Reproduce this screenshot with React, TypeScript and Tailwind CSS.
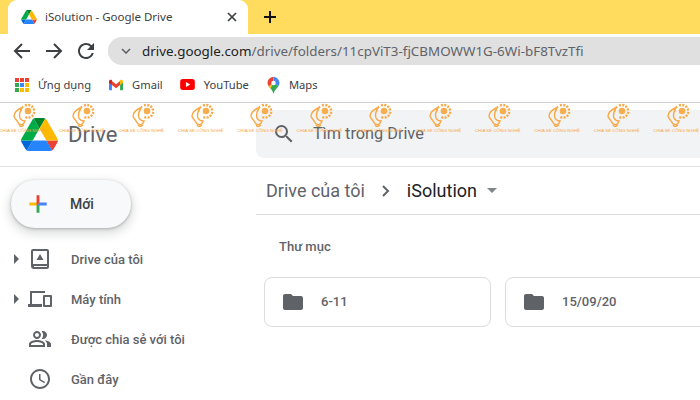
import React from "react";

const DriveLogo = ({ className }: { className: string }) => (
  <svg viewBox="0 0 87.3 78" className={className}>
    <path d="m6.6 66.85 3.85 6.65c.8 1.4 1.95 2.5 3.3 3.3l13.75-23.8h-27.5c0 1.55.4 3.1 1.2 4.5z" fill="#0066da" />
    <path d="m43.65 25-13.75-23.8c-1.35.8-2.5 1.9-3.3 3.3l-25.4 44a9.06 9.06 0 0 0 -1.2 4.5h27.5z" fill="#00ac47" />
    <path d="m73.55 76.8c1.35-.8 2.5-1.9 3.3-3.3l1.6-2.75 7.65-13.25c.8-1.4 1.2-2.95 1.2-4.5h-27.502l5.852 11.5z" fill="#ea4335" />
    <path d="m43.65 25 13.75-23.8c-1.35-.8-2.9-1.2-4.5-1.2h-18.5c-1.6 0-3.15.45-4.5 1.2z" fill="#00832d" />
    <path d="m59.8 53h-32.3l-13.75 23.8c1.35.8 2.9 1.2 4.5 1.2h50.8c1.6 0 3.15-.45 4.5-1.2z" fill="#2684fc" />
    <path d="m73.4 26.5-12.7-22c-.8-1.4-1.95-2.5-3.3-3.3l-13.75 23.8 16.15 28h27.45c0-1.55-.4-3.1-1.2-4.5z" fill="#ffba00" />
  </svg>
);

const Stroke = ({ d, w = 2 }: { d: string; w?: number }) => (
  <svg viewBox="0 0 24 24" className="w-[24px] h-[24px]" fill="none" stroke="#3c4043" strokeWidth={w}>
    <path d={d} />
  </svg>
);

const Mark = () => (
  <div className="w-[59.45px] shrink-0 flex flex-col items-center">
    <svg viewBox="0 0 24 24" className="w-[24px] h-[24px]" fill="none" stroke="#f8a845" strokeWidth="1.400">
      <path d="M9 5C5 7 2 10 2 13c0 2 2 3 3 5l2 3 3 1 2-2 1-2c-2 0-4-1-5-3-1-3 0-7 2-10z" />
      <path d="M7 22l2 2 3-2" />
      <circle cx="16" cy="8" r="3.300" fill="#f7ae4e" stroke="none" />
      <path d="M13 2.500A6.500 6.500 0 0 1 22 10a6.500 6.500 0 0 1-9 4" strokeDasharray="2 1.300" strokeWidth="2.400" />
      <path d="M11 5l-1-2M9.500 8H8" />
    </svg>
    <span className="text-[4.400px] leading-[5px] whitespace-nowrap text-[#f8a845] font-['Liberation_Sans',sans-serif] mt-[1px] -ml-[3px]">CHIA SẺ CÔNG NGHỆ</span>
  </div>
);

const Row = ({ arrow, icon, label }: { arrow?: boolean; icon: React.ReactNode; label: string }) => (
  <div className="h-[40px] flex items-center">
    <div className="w-[28px] flex justify-end pr-[9px]">
      {arrow && <div className="w-0 h-0 border-y-[5px] border-y-transparent border-l-[5px] border-l-[#5f6368]" />}
    </div>
    <div className="w-[24px] h-[24px] flex items-center justify-center">{icon}</div>
    <span className="ml-[19px] text-[13px] font-medium text-[#5f6368] pt-[1px]">{label}</span>
  </div>
);

const Folder = ({ name, className }: { name: string; className: string }) => (
  <div className={`h-[50px] border border-[#dadce0] rounded-[8px] flex items-center pl-[16px] ${className}`}>
    <svg viewBox="0 0 24 24" className="w-[24px] h-[24px]" fill="#5f6368">
      <path d="M10 4H4c-1.100 0-2 .9-2 2v12c0 1.100.9 2 2 2h16c1.100 0 2-.9 2-2V8c0-1.100-.9-2-2-2h-8l-2-2z" />
    </svg>
    <span className="ml-[16px] text-[13px] font-medium text-[#5f6368]">{name}</span>
  </div>
);

const Bookmark = ({ icon, label, className }: { icon: React.ReactNode; label: string; className: string }) => (
  <div className={`flex items-center ${className}`}>
    {icon}
    <span className="ml-[9px] text-[11.200px] text-[#3c4043]">{label}</span>
  </div>
);

export default function App() {
  const apps = ["#ea4335", "#ea4335", "#ea4335", "#34a853", "#4285f4", "#fbbc04", "#34a853", "#fbbc04", "#fbbc04"];
  return (
    <div className="relative w-[700px] h-[400px] overflow-hidden bg-white font-['Roboto',sans-serif]">
      {/* Tab strip */}
      <div className="h-[34px] bg-[#ffdc5e] flex items-end pl-[8px] font-['Noto_Sans',sans-serif]">
        <div className="w-[240px] h-[34px] bg-white rounded-t-[9px] flex items-center pl-[13px] pr-[11px]">
          <DriveLogo className="w-[16px] h-[14px]" />
          <span className="ml-[8px] text-[11.500px] text-[#3c4043]">iSolution - Google Drive</span>
          <svg viewBox="0 0 10 10" className="w-[10px] h-[10px] ml-auto" stroke="#3c4043" strokeWidth="1.7"><path d="M1 1l8 8M9 1l-8 8" /></svg>
        </div>
        <svg viewBox="0 0 14 14" className="w-[14px] h-[14px] ml-[15px] mb-[10px]" stroke="#111" strokeWidth="2"><path d="M7 1v12M1 7h12" /></svg>
      </div>
      {/* Toolbar */}
      <div className="h-[34px] flex items-center pl-[10px] font-['Noto_Sans',sans-serif]">
        <Stroke d="M20 12H5M12 5l-7 7 7 7" />
        <div className="ml-[8px]"><Stroke d="M4 12h15M12 5l7 7-7 7" /></div>
        <div className="ml-[8px]">
          <svg viewBox="0 0 24 24" className="w-[24px] h-[24px]" fill="#3c4043">
            <path d="M17.65 6.35A7.958 7.958 0 0 0 12 4c-4.42 0-7.99 3.58-7.99 8s3.57 8 7.99 8c3.73 0 6.84-2.55 7.73-6h-2.08A5.99 5.99 0 0 1 12 18c-3.31 0-6-2.69-6-6s2.69-6 6-6c1.66 0 3.14.69 4.22 1.78L13 11h7V4l-2.35 2.35z" />
          </svg>
        </div>
        <div className="ml-[10px] flex-1 h-[28px] bg-[#e0e0e0] rounded-l-[14px] flex items-center pl-[13px]">
          <svg viewBox="0 0 10 6" className="w-[10px] h-[6px]" fill="none" stroke="#5f6368" strokeWidth="1.6"><path d="M1 1l4 4 4-4" /></svg>
          <span className="ml-[11px] text-[13.400px] whitespace-nowrap text-[#5f6368]"><span className="text-[#202124]">drive.google.com</span>/drive/folders/11cpViT3-fjCBMOWW1G-6Wi-bF8TvzTfi</span>
        </div>
      </div>
      {/* Bookmarks */}
      <div className="h-[34px] border-b border-[#d0d0d0] flex items-center font-['Noto_Sans',sans-serif] box-content">
        <Bookmark className="ml-[15px]" label="Ứng dụng" icon={
          <div className="grid grid-cols-3 gap-[1.500px] w-[14px]">
            {apps.map((c, i) => <div key={i} className="w-[3.500px] h-[3.500px]" style={{ background: c }} />)}
          </div>
        } />
        <Bookmark className="ml-[18px]" label="Gmail" icon={
          <svg viewBox="0 0 24 18" className="w-[14px] h-[12px]">
            <path d="M0 3v13.500c0 .8.7 1.500 1.500 1.500H5V8z" fill="#4285f4" />
            <path d="M24 3v13.500c0 .8-.7 1.500-1.500 1.500H19V8z" fill="#34a853" />
            <path d="M5 9V2l7 5.500L19 2v7l-7 5.500z" fill="#ea4335" />
            <path d="M0 3c0-2.500 2.700-3.800 4.500-2.500L5 1v8L0 5z" fill="#c5221f" />
            <path d="M24 3c0-2.500-2.700-3.800-4.500-2.500L19 1v8l5-4z" fill="#fbbc04" />
          </svg>
        } />
        <Bookmark className="ml-[17px]" label="YouTube" icon={
          <svg viewBox="0 0 16 12" className="w-[15px] h-[11px]">
            <rect width="16" height="12" rx="3" fill="#f00" />
            <path d="M6.300 3.300v5.400L11 6z" fill="#fff" />
          </svg>
        } />
        <Bookmark className="ml-[18px]" label="Maps" icon={
          <svg viewBox="0 0 14 20" className="w-[13px] h-[17px]">
            <path d="M7 0C3 0 0 3 0 7c0 1.500.5 2.700 1.300 3.900L7 7z" fill="#ea4335" />
            <path d="M7 0c2 0 3.700.8 5 2.200L7 7z" fill="#4285f4" />
            <path d="M12 2.200C13.300 3.500 14 5.200 14 7c0 1.500-.5 2.700-1.300 3.900L7 7z" fill="#4285f4" />
            <path d="M1.300 10.900 7 7l5.700 3.900c-1.800 2.700-4.700 4.700-5.700 9.100-.6-3-2.200-5-3.500-6.500z" fill="#34a853" />
            <path d="M1.300 10.900c.7 1 1.500 1.800 2.200 2.600L7 7z" fill="#fbbc04" />
            <circle cx="7" cy="7" r="2.600" fill="#fff" />
          </svg>
        } />
      </div>
      {/* Drive header */}
      <div className="h-[63px] border-b border-[#dfe1e5] flex box-content">
        <div className="w-[256px] flex items-center pl-[21px]">
          <DriveLogo className="w-[37px] h-[33px]" />
          <span className="ml-[10px] text-[22px] text-[#5f6368]">Drive</span>
        </div>
        <div className="flex-1 pt-[7px]">
          <div className="h-[48px] bg-[#f1f3f4] rounded-l-[8px] flex items-center pl-[16px]">
            <svg viewBox="0 0 24 24" className="w-[24px] h-[24px]" fill="#5f6368">
              <path d="M15.500 14h-.790l-.280-.270A6.471 6.471 0 0 0 16 9.500 6.500 6.500 0 1 0 9.500 16c1.610 0 3.090-.590 4.230-1.570l.270.280v.790l5 4.990L20.490 19l-4.990-5zm-6 0C7.010 14 5 11.990 5 9.500S7.010 5 9.500 5 14 7.010 14 9.500 11.990 14 9.500 14z" />
            </svg>
            <span className="ml-[17px] text-[16.300px] text-[#5f6368]">Tìm trong Drive</span>
          </div>
        </div>
      </div>
      {/* Body */}
      <div className="flex">
        <div className="w-[256px] shrink-0">
          <div className="pl-[11px] pt-[13px] pb-[11px]">
            <div className="w-[120px] h-[48px] rounded-[24px] bg-[#f8f9fa] shadow-[0_1px_3px_rgba(60,64,67,0.35),0_4px_8px_3px_rgba(60,64,67,0.15)] flex items-center pl-[14px]">
              <svg viewBox="0 0 36 36" className="w-[26px] h-[26px]">
                <path fill="#34a853" d="M16 16v14h4V20z" />
                <path fill="#4285f4" d="M30 16H20l-4 4h14z" />
                <path fill="#fbbc05" d="M6 16v4h10l4-4z" />
                <path fill="#ea4335" d="M20 16V6h-4v14z" />
              </svg>
              <span className="ml-[19px] text-[14px] font-medium text-[#3c4043]">Mới</span>
            </div>
          </div>
          <Row arrow label="Drive của tôi" icon={
            <svg viewBox="0 0 24 24" className="w-[24px] h-[24px]" fill="#5f6368">
              <path fillRule="evenodd" d="M5 2h14a2 2 0 0 1 2 2v16a2 2 0 0 1-2 2H6a3 3 0 0 1-3-3V4a2 2 0 0 1 2-2zm0 2v13h14V4zm1 15v1h13v-1zM12 7l3.500 6h-7z" />
            </svg>
          } />
          <Row arrow label="Máy tính" icon={
            <svg viewBox="0 0 24 24" className="w-[24px] h-[24px]" fill="#5f6368">
              <path fillRule="evenodd" d="M2 4h15v2H4v11h10v3H0v-3h2zm14 4h7a1 1 0 0 1 1 1v10a1 1 0 0 1-1 1h-7a1 1 0 0 1-1-1V9a1 1 0 0 1 1-1zm1 2v8h5v-8z" />
            </svg>
          } />
          <Row label="Được chia sẻ với tôi" icon={
            <svg viewBox="0 0 24 24" className="w-[24px] h-[24px]" fill="#5f6368">
              <path d="M16.670 13.130C18.040 14.060 19 15.320 19 17v3h4v-3c0-2.180-3.570-3.470-6.330-3.870zM15 12c2.210 0 4-1.790 4-4s-1.790-4-4-4c-.470 0-.910.100-1.330.240a5.980 5.980 0 0 1 0 7.520c.420.140.860.240 1.330.240zM9 12c2.210 0 4-1.790 4-4s-1.790-4-4-4-4 1.790-4 4 1.790 4 4 4zm0-6c1.100 0 2 .900 2 2s-.900 2-2 2-2-.900-2-2 .900-2 2-2zM9 13c-2.670 0-8 1.340-8 4v3h16v-3c0-2.660-5.330-4-8-4zm6 5H3v-.990C3.200 16.290 6.300 15 9 15s5.800 1.290 6 2v1z" />
            </svg>
          } />
          <Row label="Gần đây" icon={
            <svg viewBox="0 0 24 24" className="w-[24px] h-[24px]" fill="#5f6368">
              <path d="M11.990 2C6.470 2 2 6.480 2 12s4.470 10 9.990 10C17.520 22 22 17.520 22 12S17.520 2 11.990 2zM12 20c-4.420 0-8-3.580-8-8s3.580-8 8-8 8 3.580 8 8-3.580 8-8 8zm.500-13H11v6l5.250 3.150.750-1.230-4.500-2.670z" />
            </svg>
          } />
        </div>
        <div className="flex-1 min-w-0">
          <div className="h-[47px] border-b border-[#dadce0] box-content flex items-center pl-[10px]">
            <span className="text-[18px] text-[#5f6368]">Drive của tôi</span>
            <svg viewBox="0 0 8 12" className="w-[8px] h-[12px] ml-[17px]" fill="none" stroke="#5f6368" strokeWidth="2"><path d="M1 1l5 5-5 5" /></svg>
            <span className="ml-[17px] text-[18px] text-[#202124]">iSolution</span>
            <div className="ml-[10px] w-0 h-0 border-x-[5px] border-x-transparent border-t-[5px] border-t-[#80868b]" />
          </div>
          <div className="pl-[23px] pt-[22px] h-[62px] text-[13px] font-medium text-[#5f6368]">Thư mục</div>
          <div className="flex gap-[14px] pl-[8px] w-[700px]">
            <Folder name="6-11" className="w-[227px]" />
            <Folder name="15/09/20" className="w-[227px]" />
          </div>
        </div>
      </div>
      {/* Watermark */}
      <div className="absolute left-[-6px] top-[103px] flex pointer-events-none">
        {Array.from({ length: 13 }).map((_, i) => <Mark key={i} />)}
      </div>
    </div>
  );
}
